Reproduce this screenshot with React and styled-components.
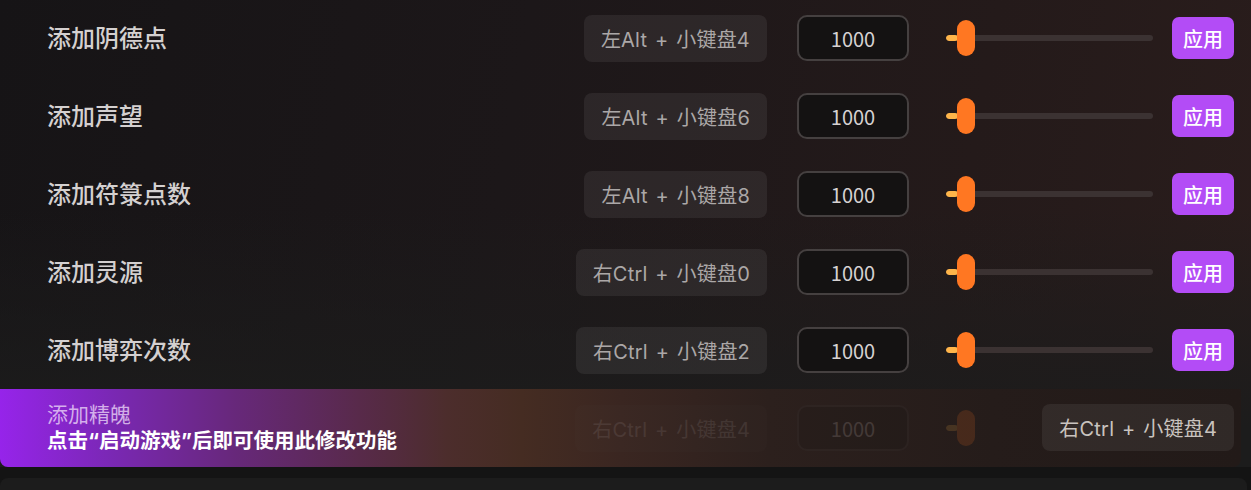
import React from 'react';
import styled, { createGlobalStyle } from 'styled-components';

const GlobalStyle = createGlobalStyle`
  html, body {
    margin: 0;
    padding: 0;
    background: #141414;
    font-family: "Noto Sans CJK SC", "Noto Sans", sans-serif;
    overflow: hidden;
  }
`;

const Page = styled.div`
  width: 1251px;
  height: 490px;
  overflow: hidden;
`;

const Panel = styled.div`
  margin-top: -1px;
  background:
    linear-gradient(180deg, rgba(28, 28, 28, 0) 45%, #1c1c1c 92%),
    linear-gradient(100deg, #161416 0%, #1c1719 40%, #241a1a 75%, #2a1d1c 100%);
`;

const Row = styled.div`
  position: relative;
  display: flex;
  align-items: center;
  height: 78px;
  padding: 0 17px 0 47px;
  box-sizing: border-box;
`;

const LockedRow = styled(Row)`
  margin-right: 10px;
  padding-right: 7px;
  border-radius: 0 0 8px 8px;
  background: linear-gradient(
    90deg,
    #9624ea 0%,
    #7a28b4 9%,
    #67287a 19%,
    #582a4a 29%,
    #4c2d2c 36%,
    #452c22 42%,
    #3a2621 50%,
    #2c201d 62%,
    #251c1a 80%,
    #221a18 100%
  );
`;

const Label = styled.div`
  flex: 1;
  margin-top: -4px;
  font-size: 24px;
  font-weight: 500;
  color: #d4d0d0;
`;

const Notice = styled.div`
  flex: 1;
  display: flex;
  flex-direction: column;
  line-height: 28px;
  margin-top: -3px;
`;

const NoticeTitle = styled.span`
  font-size: 21px;
  color: rgba(236, 214, 248, 0.78);
`;

const NoticeText = styled.span`
  font-family: Inter, "Noto Sans CJK SC", sans-serif;
  font-size: 20.5px;
  font-weight: 700;
  color: #ffffff;
`;

const Faded = styled.div`
  display: flex;
  align-items: center;
  opacity: 0.15;
`;

const Chip = styled.div`
  height: 47px;
  padding: 0 17px;
  display: flex;
  align-items: center;
  border-radius: 8px;
  background: rgba(255, 255, 255, 0.065);
  color: ${({ $strong }) => ($strong ? '#c9c3bf' : '#aba7a7')};
  font-family: Inter, "Noto Sans CJK SC", sans-serif;
  font-size: 20px;
  word-spacing: 2px;
  letter-spacing: 0.2px;
  white-space: nowrap;
`;

const HotkeyOverlay = styled(Chip)`
  position: absolute;
  right: 7px;
  top: 15px;
`;

const ValueBox = styled.div`
  width: 112px;
  height: 46px;
  margin-left: 30px;
  box-sizing: border-box;
  border: 2px solid #454040;
  border-radius: 10px;
  background: #141212;
  display: flex;
  align-items: center;
  justify-content: center;
  color: #d6d2d2;
  font-size: 20px;
`;

const Slider = styled.div`
  position: relative;
  width: 207px;
  height: 36px;
  margin-left: 37px;
  display: flex;
  align-items: center;
`;

const Track = styled.div`
  width: 100%;
  height: 6px;
  border-radius: 3px;
  background: ${({ $hidden }) => ($hidden ? 'transparent' : '#3b3232')};
  overflow: hidden;
`;

const Fill = styled.div`
  height: 100%;
  background: #ffb54a;
  border-radius: 3px;
`;

const Thumb = styled.div`
  position: absolute;
  top: 0;
  width: 18px;
  height: 36px;
  border-radius: 9px;
  background: #ff7722;
`;

const ApplyButton = styled.button`
  width: 62px;
  height: 42px;
  margin-left: 19px;
  border: none;
  border-radius: 7px;
  background: #b34cf6;
  color: #ffffff;
  font-family: inherit;
  font-size: 20px;
  font-weight: 500;
  padding: 0;
  cursor: pointer;
  visibility: ${({ $hidden }) => ($hidden ? 'hidden' : 'visible')};
`;

const NextCard = styled.div`
  margin: 11px 4px 0 0;
  height: 40px;
  border-radius: 8px 8px 0 0;
  background: #1c1c1c;
`;

const rows = [
  { label: '添加阴德点', key: '左Alt + 小键盘4' },
  { label: '添加声望', key: '左Alt + 小键盘6' },
  { label: '添加符箓点数', key: '左Alt + 小键盘8' },
  { label: '添加灵源', key: '右Ctrl + 小键盘0' },
  { label: '添加博弈次数', key: '右Ctrl + 小键盘2' },
];

const ValueSlider = ({ percent, hideTrack }) => (
  <Slider>
    <Track $hidden={hideTrack}>
      <Fill style={{ width: `${percent + 6}%` }} />
    </Track>
    <Thumb style={{ left: `${percent + 5.3}%` }} />
  </Slider>
);

const CheatRow = ({ label, hotkey }) => (
  <Row>
    <Label>{label}</Label>
    <Chip>{hotkey}</Chip>
    <ValueBox>1000</ValueBox>
    <ValueSlider percent={0} />
    <ApplyButton>应用</ApplyButton>
  </Row>
);

const App = () => (
  <Page>
    <GlobalStyle />
    <Panel>
      {rows.map((r) => (
        <CheatRow key={r.label} label={r.label} hotkey={r.key} />
      ))}
      <LockedRow>
        <Notice>
          <NoticeTitle>添加精魄</NoticeTitle>
          <NoticeText>点击“启动游戏”后即可使用此修改功能</NoticeText>
        </Notice>
        <Faded>
          <Chip>右Ctrl + 小键盘4</Chip>
          <ValueBox>1000</ValueBox>
          <ValueSlider percent={0} hideTrack />
          <ApplyButton $hidden>应用</ApplyButton>
        </Faded>
        <HotkeyOverlay $strong>右Ctrl + 小键盘4</HotkeyOverlay>
      </LockedRow>
    </Panel>
    <NextCard />
  </Page>
);

export default App;
